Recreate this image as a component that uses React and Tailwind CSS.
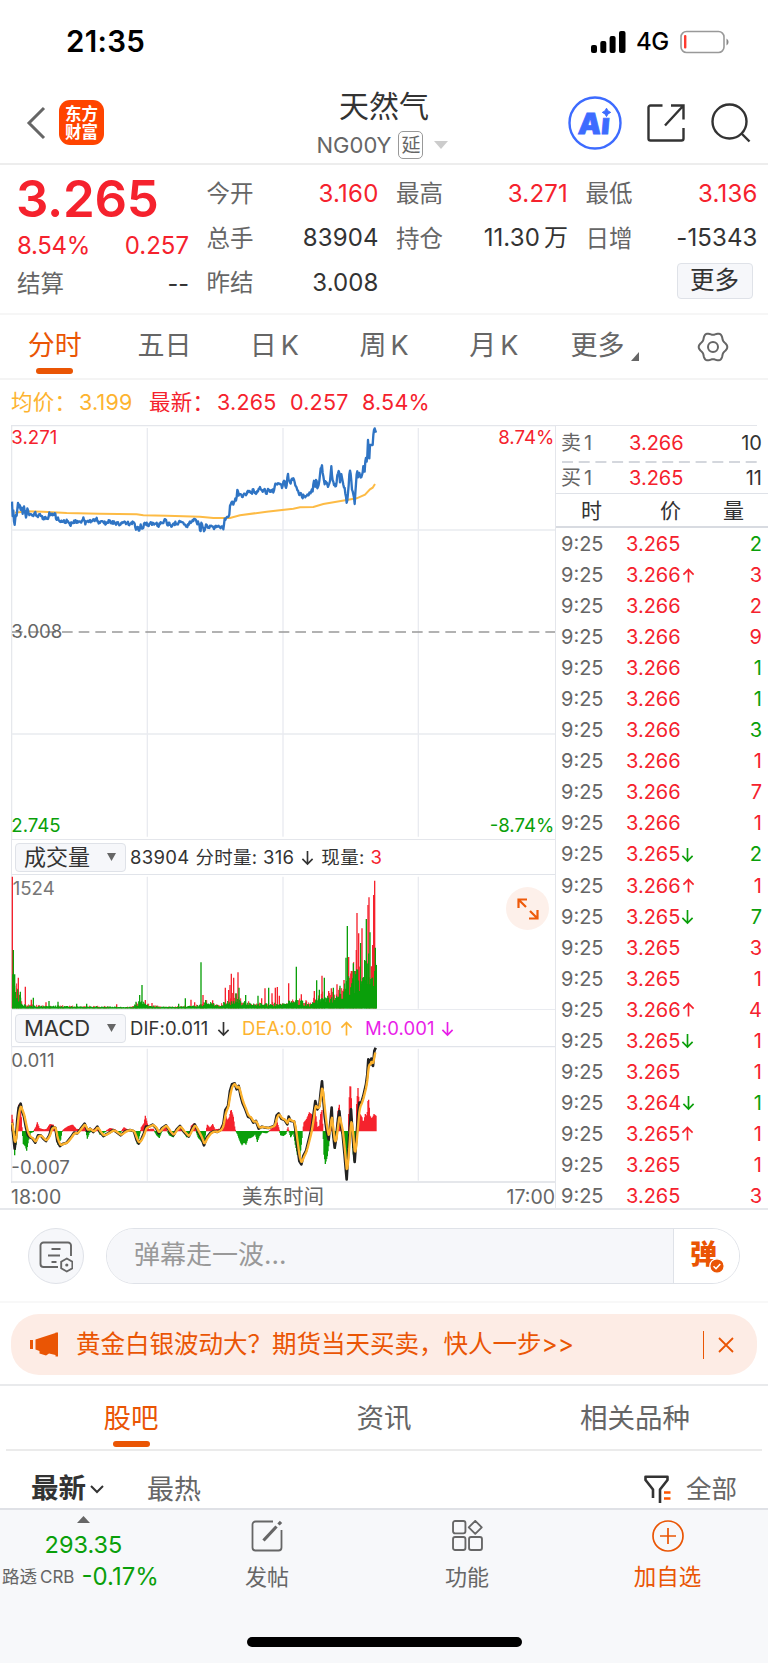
const quoteColumns = [
  [
    { label: "今开", value: "3.160", up: true },
    { label: "总手", value: "83904" },
    { label: "昨结", value: "3.008" },
  ],
  [
    { label: "最高", value: "3.271", up: true },
    { label: "持仓", value: "11.30", unit: "万" },
  ],
  [
    { label: "最低", value: "3.136", up: true },
    { label: "日增", value: "-15343" },
  ],
];

const periods = [["分时"], ["五日"], ["日", "K"], ["周", "K"], ["月", "K"], ["更多"]];

// price, direction of the tick, lots, "b" = buy (red) / "s" = sell (green)
const trades = [
  ["3.265", "", 2, "s"],
  ["3.266", "up", 3, "b"],
  ["3.266", "", 2, "b"],
  ["3.266", "", 9, "b"],
  ["3.266", "", 1, "s"],
  ["3.266", "", 1, "s"],
  ["3.266", "", 3, "s"],
  ["3.266", "", 1, "b"],
  ["3.266", "", 7, "b"],
  ["3.266", "", 1, "b"],
  ["3.265", "down", 2, "s"],
  ["3.266", "up", 1, "b"],
  ["3.265", "down", 7, "s"],
  ["3.265", "", 3, "b"],
  ["3.265", "", 1, "b"],
  ["3.266", "up", 4, "b"],
  ["3.265", "down", 1, "b"],
  ["3.265", "", 1, "b"],
  ["3.264", "down", 1, "s"],
  ["3.265", "up", 1, "b"],
  ["3.265", "", 1, "b"],
  ["3.265", "", 3, "b"],
];

const pricePoints = [
  36,250, 38,290, 40,270, 43,320, 47,285, 50,290, 54,250, 56,265, 59,243, 62,270, 65,255, 68,280, 71,258, 74,270, 78,290,
  82,270, 88,285, 94,280, 98,290, 106,278, 112,290, 118,280, 122,288, 130,295, 138,290, 145,298, 147,275, 152,285, 160,282,
  166,285, 170,300, 174,295, 178,305, 185,300, 195,307, 203,300, 210,315, 222,303, 235,308, 243,305, 251,292, 256,310,
  265,303, 275,305, 281,300, 290,298, 298,308, 306,303, 315,310, 325,305, 338,306, 350,310, 362,314, 375,308, 388,311,
  400,308, 405,315, 407,335, 412,318, 416,332, 422,318, 428,325, 434,308, 440,312, 446,318, 452,308, 460,312, 468,307,
  474,320, 482,305, 490,310, 496,298, 502,312, 508,310, 514,320, 522,312, 530,308, 536,312, 540,302, 546,305, 554,315,
  562,318, 570,308, 578,302, 585,300, 592,308, 598,310, 601,340, 604,310, 608,320, 613,335, 617,315, 626,325, 634,318,
  644,324, 652,318, 660,324, 666,318, 670,328, 674,300, 680,292, 688,288, 690,255, 695,245, 700,250, 706,235, 709,240,
  712,212, 717,228, 722,220, 726,235, 732,218, 740,222, 748,212, 754,222, 760,208, 766,220, 774,210, 781,205, 788,218,
  794,208, 798,222, 804,210, 812,215, 822,212, 826,188, 832,192, 840,190, 846,200, 852,180, 858,205, 861,185, 864,160,
  867,185, 872,192, 876,175, 882,175, 886,195, 892,212, 898,225, 904,222, 906,235, 912,225, 920,230, 928,222, 934,212,
  938,210, 942,180, 946,200, 949,175, 953,210, 958,180, 962,150, 966,140, 969,165, 973,190, 979,185, 984,200, 990,180,
  994,140, 998,185, 1003,195, 1008,200, 1012,165, 1017,150, 1020,185, 1024,160, 1028,185, 1034,205, 1037,225, 1041,250,
  1045,210, 1048,160, 1051,150, 1055,200, 1060,225, 1064,248, 1068,195, 1071,150, 1075,175, 1078,155, 1083,175, 1088,160,
  1090,140, 1094,155, 1097,108, 1101,130, 1104,60, 1108,115, 1110,75, 1118,75, 1120,45, 1123,22, 1128,38,
];

const averagePoints = [
  45,278, 80,274, 130,275, 200,279, 300,281, 410,283, 430,286, 500,287, 600,290, 640,294, 690,294, 720,286, 800,275,
  880,266, 900,262, 940,261, 970,252, 1040,240, 1070,235, 1095,224, 1110,208, 1118,203, 1125,192,
];

// usual bar height along the session
const volumeBase = [
  36,160, 42,115, 46,85, 52,60, 58,48, 64,42, 68,12, 90,10, 130,9, 180,8, 240,7, 330,6, 380,4, 400,8, 415,22, 435,20, 450,9, 500,5,
  560,7, 600,10, 615,22, 640,16, 660,8, 674,22, 690,26, 700,42, 715,35, 730,22, 760,15, 800,16, 850,18, 880,30, 900,26,
  930,14, 950,38, 975,45, 1000,45, 1025,60, 1040,100, 1050,95, 1060,125, 1072,125, 1085,115, 1095,135, 1105,165, 1115,115, 1122,150, 1130,100,
];

const volumeSpikes = [
  [37,395,"r"], [40,175,"g"], [44,102,"g"], [50,60,"r"], [55,92,"r"], [61,50,"g"], [76,65,"r"], [94,26,"r"], [100,32,"g"],
  [138,18,"r"], [147,22,"g"], [174,20,"g"], [230,14,"g"], [260,14,"g"], [350,12,"r"], [408,20,"g"], [419,40,"g"], [426,70,"g"],
  [436,25,"r"], [456,16,"r"], [536,14,"g"], [556,30,"g"], [573,26,"r"], [584,18,"r"], [603,138,"g"], [609,40,"r"], [617,25,"g"],
  [638,24,"r"], [676,62,"r"], [686,55,"r"], [690,70,"r"], [694,104,"r"], [701,92,"r"], [708,45,"g"], [714,108,"r"], [717,62,"g"],
  [737,40,"g"], [774,38,"g"], [785,30,"r"], [795,60,"r"], [806,62,"g"], [816,45,"r"], [826,62,"r"], [832,64,"r"], [838,38,"r"],
  [866,75,"r"], [889,125,"g"], [904,42,"r"], [918,24,"r"], [943,52,"r"], [950,84,"g"], [958,56,"g"], [966,98,"r"], [973,92,"g"],
  [986,52,"r"], [994,60,"r"], [1000,62,"g"], [1011,72,"r"], [1020,68,"g"], [1032,85,"r"], [1038,152,"g"], [1042,247,"g"],
  [1046,154,"r"], [1054,112,"r"], [1060,135,"g"], [1066,112,"r"], [1069,175,"r"], [1071,286,"r"], [1076,225,"r"], [1082,196,"g"],
  [1086,240,"r"], [1094,145,"g"], [1099,268,"g"], [1104,310,"r"], [1107,333,"r"], [1110,228,"g"], [1114,126,"r"],
  [1118,190,"r"], [1121,340,"r"], [1124,383,"r"], [1126,182,"g"], [1129,130,"g"],
];

const difPoints = [
  36,340, 40,380, 44,418, 48,385, 52,330, 56,295, 62,283, 66,305, 72,322, 78,355, 84,378, 90,384, 98,388, 106,400, 114,378,
  122,378, 130,388, 138,395, 148,378, 156,352, 166,355, 172,395, 180,410, 190,403, 200,400, 212,385, 222,370, 232,372,
  242,358, 254,343, 262,365, 270,358, 280,368, 292,352, 300,368, 310,380, 324,372, 340,362, 352,370, 362,378, 376,366,
  390,362, 402,366, 410,392, 416,403, 424,390, 432,372, 438,352, 446,352, 458,346, 468,356, 476,372, 486,356, 498,348,
  510,368, 520,378, 530,360, 540,350, 552,368, 566,382, 576,358, 584,345, 596,370, 604,385, 612,408, 620,385, 632,370,
  642,366, 652,368, 664,360, 670,345, 676,302, 684,290, 690,245, 696,225, 704,222, 710,240, 716,230, 722,260, 728,282,
  736,300, 744,322, 752,325, 760,340, 768,335, 776,358, 786,352, 796,355, 806,356, 816,352, 824,348, 830,318, 836,312,
  844,328, 854,332, 862,345, 866,322, 872,335, 882,336, 886,360, 892,410, 898,455, 904,465, 910,440, 918,425, 928,385,
  934,360, 940,320, 946,275, 952,300, 958,290, 962,250, 966,216, 970,270, 974,320, 980,365, 986,390, 992,330, 995,295,
  998,360, 1004,415, 1008,390, 1014,330, 1018,305, 1022,345, 1028,375, 1034,440, 1040,510, 1044,440, 1050,345, 1053,300,
  1058,380, 1064,458, 1068,400, 1074,320, 1078,280, 1084,280, 1090,260, 1098,225, 1102,195, 1105,150, 1112,165, 1114,148,
  1119,170, 1123,125, 1127,115,
];

const macdPoints = [
  36,48, 40,20, 44,-72, 48,-40, 52,20, 56,78, 62,70, 66,10, 70,-38, 76,-45, 80,-58, 86,-25, 92,-5, 100,-2, 108,12, 112,25,
  118,8, 130,4, 140,5, 150,20, 160,18, 166,6, 170,-2, 174,-40, 182,-25, 186,-2, 192,5, 205,14, 218,18, 228,6, 240,4, 248,8,
  254,15, 258,-2, 262,-22, 268,-5, 290,12, 300,-10, 310,-6, 330,8, 345,4, 360,-6, 372,10, 385,2, 405,-4, 412,-38, 418,-15,
  424,10, 432,22, 436,45, 440,30, 446,5, 460,6, 470,-12, 478,-20, 484,-4, 496,12, 508,-12, 520,-18, 530,4, 545,8, 560,-18,
  568,-14, 574,15, 582,22, 588,0, 594,-18, 604,-30, 612,-38, 618,0, 622,18, 630,8, 638,20, 645,4, 660,6, 670,25, 676,50,
  682,30, 688,40, 693,65, 700,42, 705,5, 712,-8, 720,-30, 726,-42, 732,-32, 738,-40, 744,-22, 752,-20, 760,-15, 766,-8,
  772,-32, 778,-15, 786,-4, 800,-6, 810,2, 822,12, 830,32, 836,10, 842,-12, 850,-14, 858,-8, 864,10, 872,-18, 880,-4,
  886,-40, 892,-70, 900,-75, 904,-40, 908,0, 912,25, 920,35, 928,55, 934,50, 940,35, 946,60, 952,10, 958,15, 962,50,
  966,62, 969,0, 972,-70, 976,-98, 982,-75, 988,-30, 992,50, 995,70, 998,0, 1002,-40, 1006,-52, 1010,-10, 1014,60,
  1018,78, 1022,30, 1026,-5, 1032,-50, 1040,-100, 1044,0, 1048,100, 1051,150, 1055,80, 1058,-50, 1063,-98, 1068,-20,
  1070,80, 1074,128, 1080,50, 1086,40, 1090,20, 1096,50, 1101,40, 1105,105, 1110,45, 1116,35, 1122,50, 1127,45,
];

function makeRandom(seed) {
  let s = seed;
  return () => {
    s = (s * 16807) % 2147483647;
    return s / 2147483647;
  };
}

function valueAt(points, x) {
  if (x <= points[0]) return points[1];
  for (let i = 2; i < points.length; i += 2) {
    if (x <= points[i]) {
      const t = (x - points[i - 2]) / (points[i] - points[i - 2]);
      return points[i - 1] + t * (points[i + 1] - points[i - 1]);
    }
  }
  return points[points.length - 1];
}

function jitterLine(points) {
  const random = makeRandom(71);
  const out = [];
  for (let x = 36; x <= 1128; x += 2) {
    const noise = x > 1090 ? 0 : (random() - 0.5) * 10;
    out.push(`${x},${(valueAt(points, x) + noise).toFixed(1)}`);
  }
  return out.join(" ");
}

const priceLine = jitterLine(pricePoints);

const deaLine = (() => {
  const out = [];
  let y = valueAt(difPoints, 36);
  for (let x = 36; x <= 1127; x += 2) {
    y += (valueAt(difPoints, x) - y) * 0.42;
    out.push(`${x},${y.toFixed(1)}`);
  }
  return out.join(" ");
})();

function bar(x, h, base) {
  return `M${x} ${base}V${(base - h).toFixed(1)}`;
}

const volumeBars = (() => {
  const random = makeRandom(2024);
  let red = "";
  let green = "";
  for (let x = 38; x <= 1128; x += 3) {
    const top = valueAt(volumeBase, x);
    const r = random();
    if (r > 0.55) red += bar(x, top * (0.6 + random() * 0.6), 537);
    green += bar(x, Math.max(2, top * (r > 0.55 ? 0.35 + random() * 0.45 : 0.6 + random() * 0.45)), 537);
  }
  return { red, green };
})();

const macdBars = (() => {
  let red = "";
  let green = "";
  for (let x = 36; x <= 1129; x += 2) {
    const h = valueAt(macdPoints, x);
    if (h > 0) red += bar(x, h + 2, 366);
    else green += bar(x, h - 1, 365);
  }
  return { red, green };
})();

// six soft teeth around the centre
const gearOutline = Array.from({ length: 72 }, (_, i) => {
  const a = (i * Math.PI) / 36;
  const r = 13 + 1.3 * Math.cos(6 * a);
  return `${(16 + r * Math.cos(a)).toFixed(2)},${(16 + r * Math.sin(a) * 1.04).toFixed(2)}`;
}).join(" ");

function GridLines({ top, bottom }) {
  return (
    <path
      d={`M442 ${top}V${bottom}M849 ${top}V${bottom}M1255 ${top}V${bottom}`}
      stroke="#e9ebf0"
      strokeWidth="4"
    />
  );
}

function PriceChart() {
  return (
    <svg viewBox="33 15 1632 1242" className="block h-[414px] w-[544px] font-[Inter]">
      <path d="M33 17H1665M35 15V1259" stroke="#e4e6eb" strokeWidth="3.5" />
      <path d="M35 330H1665M35 942H1665" stroke="#e9ebf0" strokeWidth="4" />
      <GridLines top={24} bottom={1250} />
      <path d="M36 636H1665" stroke="#999" strokeWidth="4" strokeDasharray="32 18" />
      <polyline
        points={averagePoints.join(" ")}
        fill="none"
        stroke="#fdbb45"
        strokeWidth="6"
      />
      <polyline points={priceLine} fill="none" stroke="#2f74c4" strokeWidth="7" strokeLinejoin="round" />
      <g fontSize="56">
        <text x="34" y="71" fill="#f5222d">3.271</text>
        <text x="1663" y="71" textAnchor="end" fill="#f5222d">8.74%</text>
        <text x="34" y="653" fill="#666">3.008</text>
        <text x="34" y="1237" fill="#0a9f0a">2.745</text>
        <text x="1663" y="1237" textAnchor="end" fill="#0a9f0a">-8.74%</text>
      </g>
    </svg>
  );
}

function VolumeChart() {
  return (
    <svg viewBox="33 134 1632 408" className="block h-[136px] w-[544px] font-[Inter]">
      <path d="M33 134H1665" stroke="#e1e4ea" strokeWidth="6" />
      <path d="M35 134V542M33 541H1665" stroke="#e9ebf0" strokeWidth="3.5" />
      <GridLines top={142} bottom={538} />
      <path d={volumeBars.red} stroke="#f5222d" strokeWidth="3" />
      {volumeSpikes.map(([x, h, c]) => (
        <path key={x} d={bar(x, h, 537)} stroke={c === "r" ? "#f5222d" : "#0a9f0a"} strokeWidth="4" />
      ))}
      <path d={volumeBars.green} stroke="#0a9f0a" strokeWidth="3.4" />
      <path d="M36 536H1131" stroke="#0a9f0a" strokeWidth="3" />
      <text x="38" y="198" fontSize="56" fill="#777">1524</text>
    </svg>
  );
}

function MacdChart() {
  return (
    <svg viewBox="33 110 1632 411" className="block h-[137px] w-[544px] font-[Inter]">
      <path d="M33 111H1665" stroke="#e1e4ea" strokeWidth="5" />
      <path d="M35 110V521" stroke="#e9ebf0" strokeWidth="3.5" />
      <path d="M33 518H1665" stroke="#dcdfe5" strokeWidth="4" />
      <GridLines top={118} bottom={514} />
      <path d={macdBars.red} stroke="#f5222d" strokeWidth="4" />
      <path d={macdBars.green} stroke="#0a9f0a" strokeWidth="4" />
      <polyline points={difPoints.join(" ")} fill="none" stroke="#222" strokeWidth="8" strokeLinejoin="round" />
      <polyline points={deaLine} fill="none" stroke="#fdb32f" strokeWidth="7" strokeLinejoin="round" />
      <g fontSize="56" fill="#666">
        <text x="34" y="174">0.011</text>
        <text x="34" y="495">-0.007</text>
      </g>
    </svg>
  );
}

function Arrow({ down, className }) {
  return (
    <svg viewBox="0 0 14 18" className={className} fill="none" stroke="currentColor" strokeWidth="1.8">
      {down ? <path d="M7 2v14M1.5 10.5L7 16l5.5-5.5" /> : <path d="M7 16.500V2.500M1.500 8L7 2.500 12.500 8" />}
    </svg>
  );
}

function StatusBar() {
  return (
    <div className="flex h-[84px] items-center justify-between pl-[66px] pr-[38px]">
      <span className="text-[29.500px] font-semibold leading-none tracking-[0.3px] text-black">21:35</span>
      <div className="flex items-center">
        <svg viewBox="0 0 35 22" className="h-[22px] w-[35px]">
          <rect x="0" y="14" width="6" height="8" rx="2" />
          <rect x="9.300" y="10" width="6" height="12" rx="2" />
          <rect x="18.600" y="5" width="6" height="17" rx="2" />
          <rect x="28" y="0" width="6.500" height="22" rx="2" />
        </svg>
        <span className="ml-[10px] text-[24px] font-medium leading-none tracking-[-0.3px] text-black">4G</span>
        <svg viewBox="0 0 50 24" className="ml-[11px] h-[24px] w-[50px]">
          <rect x="1" y="1.500" width="43" height="21" rx="5.500" fill="none" stroke="#999" strokeWidth="1.600" />
          <rect x="4" y="5" width="2.400" height="13.500" rx="1" fill="#ff3b30" />
          <path d="M46.500 8.500a4 4 0 0 1 0 7z" fill="#888" />
        </svg>
      </div>
    </div>
  );
}

function Header() {
  return (
    <header className="grid h-[81px] grid-cols-[250px_1fr_250px] border-b-2 border-[#ededed]">
      <div className="flex items-center pb-[2px] pl-[26px]">
        <svg viewBox="0 0 20 34" className="h-[34px] w-[20px]" fill="none" stroke="#666" strokeWidth="3">
          <path d="M18 2L3 17l15 15" />
        </svg>
        <div className="ml-[13px] flex h-[45px] w-[45px] flex-col items-center justify-center rounded-[11px] bg-[#ff4400] text-[16.5px] font-bold leading-[18px] text-white">
          <span>东方</span>
          <span>财富</span>
        </div>
      </div>
      <div className="flex flex-col items-center">
        <div className="mt-[5px] text-[30px] leading-[34px] text-[#333]">天然气</div>
        <div className="mt-[8px] flex items-center pr-[3px]">
          <span className="text-[22px] leading-none text-[#666]">NG00Y</span>
          <span className="ml-[7px] flex h-[28px] w-[25px] items-center justify-center rounded-[5px] border-[1.5px] border-[#999] text-[19px] leading-none text-[#666]">
            延
          </span>
          <svg viewBox="0 0 14 8" className="ml-[11px] h-[8px] w-[14px]" fill="#ccc">
            <path d="M0 0h14L7 8z" />
          </svg>
        </div>
      </div>
      <div className="flex items-center justify-end pb-[2px] pr-[17px]">
        <svg viewBox="0 0 54 54" className="h-[54px] w-[54px]">
          <circle cx="27" cy="27" r="25.500" fill="none" stroke="#3d6bff" strokeWidth="2.400" />
          <text
            transform="translate(9.5 37.500) skewX(-5)"
            fontSize="29"
            fontWeight="900"
            fill="#3d6bff"
            stroke="#3d6bff"
            strokeWidth="0.8"
            className="font-[Inter]"
          >
            Aı
          </text>
          <path d="M38.500 12.200q.9 3.300 4.200 4.200-3.300.9-4.200 4.200-.9-3.300-4.200-4.200 3.300-.9 4.200-4.200z" fill="#3d6bff" stroke="#3d6bff" />
        </svg>
        <svg viewBox="0 0 38 38" className="ml-[25px] h-[38px] w-[38px]" fill="none" stroke="#333" strokeWidth="2.400">
          <path d="M15.500 1.500H3.500a2 2 0 0 0-2 2v31a2 2 0 0 0 2 2h31a2 2 0 0 0 2-2V24M24 1.500h12.500V15.500M36 2L18 21.500" />
        </svg>
        <svg viewBox="0 0 40 40" className="ml-[26px] h-[40px] w-[40px]" fill="none" stroke="#333" strokeWidth="2.400">
          <circle cx="18.500" cy="18.500" r="17" />
          <path d="M30.500 30.500l8 8" />
        </svg>
      </div>
    </header>
  );
}

function Quote() {
  return (
    <section className="flex h-[150px] border-b-2 border-[#f6f6f6] pl-[17px]">
      <div className="w-[172px] pt-[9px]">
        <div className="-ml-px text-[51px] font-semibold leading-[50px] tracking-[-0.3px] text-[#f5222d]">3.265</div>
        <div className="mt-[10px] flex justify-between text-[24px] leading-[24px] text-[#f5222d]">
          <span className="tracking-[-0.3px]">8.54%</span>
          <span>0.257</span>
        </div>
        <div className="mt-[14px] flex justify-between text-[23.500px] leading-[24px]">
          <span className="text-[#666]">结算</span>
          <span className="text-[#333]">--</span>
        </div>
      </div>
      {quoteColumns.map((column, i) => (
        <div key={i} className="ml-[17.500px] flex w-[172px] flex-col pt-[6.500px]">
          {column.map((item) => (
            <div key={item.label} className="flex h-[44.500px] items-center justify-between text-[24px] leading-none">
              <span className="text-[23.500px] text-[#666]">{item.label}</span>
              <span className={item.up ? "tracking-[0.2px] text-[#f5222d]" : "tracking-[0.1px] text-[#333]"}>
                {item.value}
                {item.unit && <span className="ml-[4px]">{item.unit}</span>}
              </span>
            </div>
          ))}
          {i === 2 && (
            <button className="ml-auto mr-[5px] mt-[2px] flex h-[36px] w-[76px] items-center justify-center rounded-[4px] border border-[#dfe2e8] bg-[#f6f7fa] text-[24.500px] leading-none text-[#333]">
              更多
            </button>
          )}
        </div>
      ))}
    </section>
  );
}

function Periods() {
  return (
    <nav className="grid h-[65px] grid-cols-7 border-b-2 border-[#f4f4f4]">
      {periods.map(([name, unit], i) => (
        <div
          key={i}
          className={
            i === 0
              ? "relative flex items-center justify-center text-[27px] text-[#ea5504]"
              : "relative flex items-center justify-center text-[27px] text-[#666]"
          }
        >
          <span className={i === 5 ? "ml-[3px]" : ""}>{name}</span>
          {unit && <span className="ml-[4px]">{unit}</span>}
          {i === 0 && <span className="absolute bottom-[4px] h-[6px] w-[37px] rounded-full bg-[#ea5504]" />}
          {i === 5 && (
            <svg viewBox="0 0 8 9" className="ml-[7px] mt-[20px] h-[9px] w-[8px]" fill="#666">
              <path d="M8 0v9H0z" />
            </svg>
          )}
        </div>
      ))}
      <div className="flex items-center justify-center">
        <svg viewBox="0 0 32 32" className="h-[32px] w-[32px]" fill="none" stroke="#666" strokeWidth="2">
          <polygon points={gearOutline} strokeLinejoin="round" />
          <circle cx="16" cy="16" r="5" />
        </svg>
      </div>
    </nav>
  );
}

function IndicatorSelect({ name }) {
  return (
    <div className="ml-[3px] flex h-[29px] w-[111px] items-center justify-between rounded-[4px] border border-[#dfe2e8] bg-[#f6f7fa] pl-[8px] pr-[9px] text-[22px] leading-none text-[#333]">
      {name}
      <svg viewBox="0 0 9 8" className="h-[8px] w-[9px]" fill="#666">
        <path d="M0 0h9L4.500 8z" />
      </svg>
    </div>
  );
}

function Charts() {
  return (
    <div className="w-[544px]">
      <PriceChart />
      <div className="flex h-[35px] items-center border-l border-t border-[#e4e6eb]">
        <IndicatorSelect name="成交量" />
        <div className="ml-[4px] flex items-center text-[18.500px] leading-none tracking-[0.3px] text-[#333]">
          <span>83904</span>
          <span className="ml-[6px]">分时量: 316</span>
          <Arrow down className="ml-[7px] h-[17px] w-[13px]" />
          <span className="ml-[7px]">现量:</span>
          <span className="ml-[6px] text-[#f5222d]">3</span>
        </div>
      </div>
      <div className="relative">
        <VolumeChart />
        <div className="absolute right-[6px] top-[13px] flex h-[43px] w-[43px] items-center justify-center rounded-full bg-[#fdf0ea]">
          <svg viewBox="0 0 22 22" className="h-[22px] w-[22px]" fill="none" stroke="#ee5a0a" strokeWidth="2.200">
            <path d="M1.500 10V1.500H10M2 2l7 7M20.500 12v8.500H12M20 20l-7-7" />
          </svg>
        </div>
      </div>
      <div className="flex h-[36px] items-center border-l border-[#e4e6eb]">
        <IndicatorSelect name="MACD" />
        <div className="ml-[4px] flex items-center text-[18.500px] leading-none tracking-[0.1px] text-[#333]">
          <span className="w-[87px]">DIF:0.011</span>
          <Arrow down className="h-[17px] w-[13px]" />
          <span className="ml-[12px] w-[98px] text-[#fdb32f]">DEA:0.010</span>
          <Arrow className="h-[17px] w-[13px] text-[#fdb32f]" />
          <span className="ml-[12px] w-[76px] text-[#e81ee8]">M:0.001</span>
          <Arrow down className="h-[17px] w-[13px] text-[#e81ee8]" />
        </div>
      </div>
      <MacdChart />
      <div className="grid h-[27px] grid-cols-3 items-center pt-[2px] text-[19.500px] leading-none text-[#666]">
        <span>18:00</span>
        <span className="text-center text-[20.500px]">美东时间</span>
        <span className="text-right">17:00</span>
      </div>
    </div>
  );
}

function OrderRow({ side, price, lots }) {
  return (
    <div className="grid h-[35px] grid-cols-[68px_90px_1fr] items-center pb-[2px] pl-[5px] pr-[6px] text-[20px] leading-none">
      <span className="text-[#666]">
        {side}
        <span className="ml-[3px]">1</span>
      </span>
      <span className="text-[#f5222d]">{price}</span>
      <span className="text-right text-[#333]">{lots}</span>
    </div>
  );
}

function TradePanel() {
  return (
    <div className="w-[213px] border-l border-[#e4e6eb]">
      <div className="mr-[11px] h-px bg-[#e4e6eb]" />
      <OrderRow side="卖" price="3.266" lots="10" />
      <svg viewBox="0 0 196 2" className="ml-[6px] block h-[2px] w-[196px]">
        <path d="M0 1H196" stroke="#d4d7dd" strokeWidth="2" strokeDasharray="11 5.700" />
      </svg>
      <div className="-mt-[2px] h-[31.500px]">
        <OrderRow side="买" price="3.265" lots="11" />
      </div>
      <div className="h-px bg-[#dfe2e8]" />
      <div className="flex h-[34px] items-center border-b-2 border-[#d8dbe1] pt-[2px] text-[21px] leading-none text-[#333]">
        <span className="ml-[25px]">时</span>
        <span className="ml-[58px]">价</span>
        <span className="ml-[42px]">量</span>
      </div>
      <div className="pt-[1px]">
        {trades.map(([price, dir, lots, side], i) => (
          <div
            key={i}
            className="grid h-[31.050px] grid-cols-[65px_90px_1fr] items-center pl-[5px] pr-[6px] text-[20px] leading-none"
          >
            <span className="text-[#666]">9:25</span>
            <span className="flex items-center text-[#f5222d]">
              {price}
              {dir && (
                <Arrow
                  down={dir === "down"}
                  className={dir === "down" ? "ml-px h-[17px] w-[13px] text-[#0a9f0a]" : "ml-px h-[17px] w-[13px]"}
                />
              )}
            </span>
            <span className={side === "b" ? "text-right text-[#f5222d]" : "text-right text-[#0a9f0a]"}>{lots}</span>
          </div>
        ))}
      </div>
    </div>
  );
}

function DanmuBar() {
  return (
    <div className="flex h-[93px] items-start border-b-2 border-[#f8f8f8] pl-[28px] pt-[18px]">
      <div className="flex h-[56px] w-[56px] items-center justify-center rounded-full border border-[#dfe2e8] bg-[#f6f7fa]">
        <svg viewBox="0 0 34 32" className="mt-[2px] h-[32px] w-[34px]" fill="none" stroke="#666" strokeWidth="1.900">
          <path d="M32 15V4.500a3 3 0 0 0-3-3H4.500a3 3 0 0 0-3 3V23a3 3 0 0 0 3 3H19M12.500 8h9M9 14.500h12M12.500 21h5" />
          <path d="M27.800 17.500l5.600 3.300v6.400l-5.600 3.300-5.600-3.300v-6.400z" />
          <circle cx="27.800" cy="24" r="1.600" fill="#666" stroke="none" />
        </svg>
      </div>
      <div className="ml-[22px] flex h-[56px] w-[634px] overflow-hidden rounded-full border border-[#dfe2e8]">
        <div className="flex-1 bg-[#f6f7fa] pl-[27px] text-[26px] leading-[51px] text-[#999]">弹幕走一波...</div>
        <div className="relative w-[66px] border-l border-[#dfe2e8] bg-white">
          <span className="absolute left-[16px] top-[12px] text-[27px] font-black leading-[28px] text-[#ea5504]">弹</span>
          <svg viewBox="0 0 16 16" className="absolute left-[35px] top-[29px] h-[16px] w-[16px]">
            <circle cx="8" cy="8" r="7.200" fill="#ea5504" stroke="#fff" strokeWidth="1.300" />
            <path d="M4.500 8.300L7 10.600l4.300-4.600" fill="none" stroke="#fff" strokeWidth="1.500" />
          </svg>
        </div>
      </div>
    </div>
  );
}

function Banner() {
  return (
    <div className="h-[83px] border-b-2 border-[#e9eaec] px-[11px] pt-[11px]">
      <div className="flex h-[61px] items-center rounded-[28px] bg-[#fdece5] text-[#ea5504]">
        <svg viewBox="0 0 28 25" className="ml-[19px] h-[25px] w-[28px]" fill="#ea5504">
          <path d="M0 8h3v9H0zM5.500 7.500L25.500 1V.500H28v24h-2.500V23L19 21.500 16 23.500 9.500 21.500V19l-4-1.500z" />
        </svg>
        <span className="ml-[18px] text-[24.500px] leading-none">黄金白银波动大？期货当天买卖，快人一步&gt;&gt;</span>
        <span className="ml-auto h-[28px] w-[1.500px] bg-[#ea5504]" />
        <svg viewBox="0 0 16 16" className="ml-[14px] mr-[23px] h-[16px] w-[16px]" fill="none" stroke="#ea5504" strokeWidth="1.800">
          <path d="M1 1l14 14M15 1L1 15" />
        </svg>
      </div>
    </div>
  );
}

function Community() {
  return (
    <>
      <div className="mx-[6px] grid h-[65px] grid-cols-3 border-b-2 border-[#ebebeb] text-[27.500px] leading-none text-[#666]">
        <div className="relative flex items-center justify-center pr-[2px] pt-[3px] text-[#ea5504]">
          股吧
          <span className="absolute bottom-[2px] h-[6px] w-[37px] rounded-full bg-[#ea5504]" />
        </div>
        <div className="flex items-center justify-center pt-[3px]">资讯</div>
        <div className="flex items-center justify-center pr-[2px] pt-[3px]">相关品种</div>
      </div>
      <div className="flex h-[57px] items-center pl-[31px] pr-[31px] pt-[19px] leading-none">
        <span className="text-[27.500px] font-bold text-[#333]">最新</span>
        <svg viewBox="0 0 14 9" className="ml-[4px] h-[9px] w-[14px]" fill="none" stroke="#333" strokeWidth="2">
          <path d="M1 1l6 6 6-6" />
        </svg>
        <span className="ml-[43px] text-[27px] text-[#666]">最热</span>
        <svg viewBox="0 0 27 29" className="ml-auto h-[29px] w-[27px]" fill="none">
          <path d="M9 23v-8.500L1.500 5V1.800h22V5L16 14.500V28" stroke="#333" strokeWidth="2.600" strokeLinejoin="round" />
          <path d="M20 17.500h6.500M20 23.500h6.500" stroke="#ff5500" strokeWidth="2.600" />
        </svg>
        <span className="ml-[15px] text-[25.500px] text-[#666]">全部</span>
      </div>
    </>
  );
}

function BottomBar() {
  return (
    <footer className="h-[155px] border-t-2 border-[#dfe1e6] bg-[#f7f8fa]">
      <div className="flex h-[90px] leading-none">
        <div className="flex w-[167px] flex-col items-center pt-[6px] text-[#0a9f0a]">
          <svg viewBox="0 0 13 7" className="h-[7px] w-[13px]" fill="#666">
            <path d="M0 7h13L6.500 0z" />
          </svg>
          <span className="mt-[10px] text-[23.500px] leading-[24px]">293.35</span>
          <div className="mt-[8px] flex items-center self-start pl-[2px]">
            <span className="text-[17.500px] text-[#666]">路透</span>
            <span className="ml-[3px] text-[17px] text-[#666]">CRB</span>
            <span className="ml-[7px] text-[24px] leading-[24px]">-0.17%</span>
          </div>
        </div>
        <div className="flex w-[200px] flex-col items-center pt-[10px] text-[22px] text-[#666]">
          <svg viewBox="0 0 32 32" className="h-[32px] w-[32px]" fill="none" stroke="#666" strokeWidth="1.800">
            <path d="M22 1.500H4.500a3 3 0 0 0-3 3v23a3 3 0 0 0 3 3h23a3 3 0 0 0 3-3V10" />
            <path d="M12.500 20.500l13-14" strokeWidth="3.200" />
            <path d="M27.500 4.500l2.500-2.700" strokeWidth="3.200" />
          </svg>
          <span className="mt-[14px]">发帖</span>
        </div>
        <div className="flex w-[200px] flex-col items-center pt-[10px] text-[22px] text-[#666]">
          <svg viewBox="0 0 30 30" className="h-[31px] w-[31px]" fill="none" stroke="#666" strokeWidth="1.800">
            <rect x="1" y="1" width="12" height="12" rx="2" />
            <rect x="1" y="16.500" width="12" height="12.500" rx="2" />
            <rect x="16.500" y="16.500" width="12.500" height="12.500" rx="2" />
            <path d="M22.500.8l6.300 6.300-6.300 6.300-6.300-6.300z" strokeLinejoin="round" />
          </svg>
          <span className="mt-[15px]">功能</span>
        </div>
        <div className="flex w-[201px] flex-col items-center pt-[10px] text-[22.500px] text-[#ea5504]">
          <svg viewBox="0 0 32 32" className="h-[32px] w-[32px]" fill="none" stroke="#ea5504" strokeWidth="1.700">
            <circle cx="16" cy="16" r="15" />
            <path d="M8 16h16M16 8v16" />
          </svg>
          <span className="mt-[14px]">加自选</span>
        </div>
      </div>
      <div className="mx-auto mt-[37px] h-[10px] w-[275px] rounded-full bg-black" />
    </footer>
  );
}

function App() {
  return (
    <div className="h-[1663px] w-[768px] overflow-hidden bg-white font-[Inter,'Noto_Sans_CJK_SC',sans-serif]">
      <StatusBar />
      <Header />
      <Quote />
      <Periods />
      <div className="flex h-[45px] items-center pl-[11px] pt-px text-[21.500px] leading-none tracking-[0.2px] text-[#f5222d]">
        <span className="w-[68px] text-[#fdb32f]">均价：</span>
        <span className="w-[70px] text-[#fdb32f]">3.199</span>
        <span className="w-[68px]">最新：</span>
        <span className="w-[73px]">3.265</span>
        <span className="w-[72px]">0.257</span>
        <span>8.54%</span>
      </div>
      <main className="flex h-[785px] border-b-2 border-[#e6e8ec] pl-[11px]">
        <Charts />
        <TradePanel />
      </main>
      <DanmuBar />
      <Banner />
      <Community />
      <BottomBar />
    </div>
  );
}

export default App;
